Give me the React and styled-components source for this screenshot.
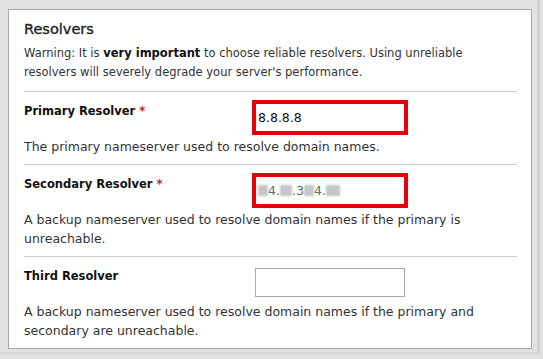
import React from 'react'
import styled, { createGlobalStyle } from 'styled-components'

const GlobalStyle = createGlobalStyle`
  html, body {
    margin: 0;
    padding: 0;
    background: #e2e2e2;
  }
  body {
    font-family: "DejaVu Sans", Verdana, sans-serif;
    color: #333;
  }
`

const Frame = styled.div`
  width: 540px;
  height: 355px;
  box-sizing: border-box;
  padding: 9px 0 0 8px;
  border-right: 3px solid #d4d4d4;
  border-bottom: 3px solid #d8d8d8;
`

const Panel = styled.section`
  width: 524px;
  box-sizing: border-box;
  background: #fff;
  border: 1px solid #a8a8a8;
  padding: 0 14px 0 15px;
`

const Header = styled.header`
  padding: 9px 0 9px;
  border-bottom: 1px solid #cdcdcd;
`

const Title = styled.h2`
  margin: 0 0 5px;
  font-size: 14.5px;
  line-height: 20px;
  font-weight: normal;
  color: #222;
  -webkit-text-stroke: 0.35px #222;
`

const Warning = styled.p`
  margin: 0;
  font-size: 11.5px;
  line-height: 19px;
  color: #333;

  strong {
    color: #111;
  }
`

const Field = styled.div`
  display: grid;
  grid-template-columns: 231px 150px 1fr;
  padding: 10px 0 8px;
  border-bottom: ${({ $last }) => ($last ? 'none' : '1px solid #cdcdcd')};
`

const Label = styled.label`
  font-size: 11.5px;
  line-height: 19px;
  font-weight: bold;
  color: #111;
`

const Required = styled.span`
  color: #d0201f;
  margin-left: 4px;
`

const Input = styled.div`
  margin-top: 1px;
  height: 29px;
  box-sizing: border-box;
  background: #fff;
  border: 1px solid ${({ $flagged }) => ($flagged ? '#e5000e' : '#a9a9a9')};
  box-shadow: ${({ $flagged }) => ($flagged ? '0 0 0 3px #e5000e' : 'none')};
  padding: 0 2px;
  display: flex;
  align-items: center;
  font-size: 12.5px;
  color: #111;
`

// blurred-out digits of the secondary address
const Hidden = styled.span`
  display: inline-block;
  height: 11px;
  width: ${({ $w }) => $w}px;
  background: #c6c6c6;
  filter: blur(1px);
`

const Faint = styled.span`
  color: #6a6a6a;
`

const Help = styled.p`
  grid-column: 1 / -1;
  margin: 5px 0 0;
  font-size: 12.5px;
  line-height: 19px;
  color: #333;
`

const App = () => (
  <>
    <GlobalStyle />
    <Frame>
      <Panel>
        <Header>
          <Title>Resolvers</Title>
          <Warning>
            Warning: It is <strong>very important</strong> to choose reliable resolvers. Using
            unreliable resolvers will severely degrade your server's performance.
          </Warning>
        </Header>

        <Field>
          <Label>
            Primary Resolver<Required>*</Required>
          </Label>
          <Input $flagged>8.8.8.8</Input>
          <Help>The primary nameserver used to resolve domain names.</Help>
        </Field>

        <Field>
          <Label>
            Secondary Resolver<Required>*</Required>
          </Label>
          <Input $flagged>
            <Hidden $w={10} />
            <Faint>4.</Faint>
            <Hidden $w={12} />
            <Faint>.3</Faint>
            <Hidden $w={10} />
            <Faint>4.</Faint>
            <Hidden $w={14} />
          </Input>
          <Help>
            A backup nameserver used to resolve domain names if the primary is unreachable.
          </Help>
        </Field>

        <Field $last>
          <Label>Third Resolver</Label>
          <Input />
          <Help>
            A backup nameserver used to resolve domain names if the primary and secondary are
            unreachable.
          </Help>
        </Field>
      </Panel>
    </Frame>
  </>
)

export default App
